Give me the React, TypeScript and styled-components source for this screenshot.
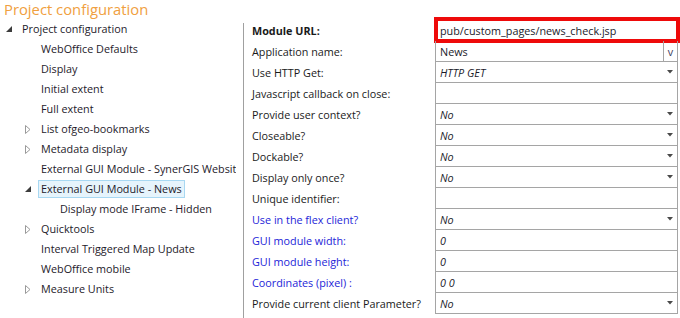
import styled, { createGlobalStyle } from 'styled-components';

const GlobalStyle = createGlobalStyle`
    html, body {
        margin: 0;
        padding: 0;
        background: #ffffff;
    }
    body {
        font-family: 'Open Sans', 'Noto Sans', sans-serif;
        font-size: 10.8px;
        color: #1e1e1e;
    }
`;

type TreeItem = {
    label: string;
    level: number;
    arrow?: 'open' | 'closed';
    selected?: boolean;
};

const treeItems: TreeItem[] = [
    { label: 'Project configuration', level: 0, arrow: 'open' },
    { label: 'WebOffice Defaults', level: 1 },
    { label: 'Display', level: 1 },
    { label: 'Initial extent', level: 1 },
    { label: 'Full extent', level: 1 },
    { label: 'List ofgeo-bookmarks', level: 1, arrow: 'closed' },
    { label: 'Metadata display', level: 1, arrow: 'closed' },
    { label: 'External GUI Module - SynerGIS Website', level: 1 },
    { label: 'External GUI Module - News', level: 1, arrow: 'open', selected: true },
    { label: 'Display mode IFrame - Hidden', level: 2 },
    { label: 'Quicktools', level: 1, arrow: 'closed' },
    { label: 'Interval Triggered Map Update', level: 1 },
    { label: 'WebOffice mobile', level: 1 },
    { label: 'Measure Units', level: 1, arrow: 'closed' },
];

type Prop = {
    label: string;
    value: string;
    kind: 'text' | 'select' | 'combo';
    bold?: boolean;
    blue?: boolean;
    italic?: boolean;
    focus?: boolean;
};

const props: Prop[] = [
    { label: 'Module URL:', value: 'pub/custom_pages/news_check.jsp', kind: 'text', bold: true, focus: true },
    { label: 'Application name:', value: 'News', kind: 'combo' },
    { label: 'Use HTTP Get:', value: 'HTTP GET', kind: 'select', italic: true },
    { label: 'Javascript callback on close:', value: '', kind: 'text' },
    { label: 'Provide user context?', value: 'No', kind: 'select', italic: true },
    { label: 'Closeable?', value: 'No', kind: 'select', italic: true },
    { label: 'Dockable?', value: 'No', kind: 'select', italic: true },
    { label: 'Display only once?', value: 'No', kind: 'select', italic: true },
    { label: 'Unique identifier:', value: '', kind: 'text' },
    { label: 'Use in the flex client?', value: 'No', kind: 'select', italic: true, blue: true },
    { label: 'GUI module width:', value: '0', kind: 'text', italic: true, blue: true },
    { label: 'GUI module height:', value: '0', kind: 'text', italic: true, blue: true },
    { label: 'Coordinates (pixel) :', value: '0 0', kind: 'text', italic: true, blue: true },
    { label: 'Provide current client Parameter?', value: 'No', kind: 'select', italic: true },
];

const ExpandedIcon = () => (
    <svg width="6" height="6" viewBox="0 0 6 6">
        <polygon points="6,0 6,6 0,6" fill="#3c3c3c" />
    </svg>
);

const CollapsedIcon = () => (
    <svg width="6" height="9" viewBox="0 0 6 9">
        <polygon points="0.5,0.5 5,4.5 0.5,8.5" fill="none" stroke="#9a9a9a" strokeWidth="1" />
    </svg>
);

const DropArrow = () => (
    <svg width="6" height="4" viewBox="0 0 6 4">
        <polygon points="0,0 6,0 3,3.5" fill="#4a4a4a" />
    </svg>
);

const App: React.FC = () => {
    return (
        <>
            <GlobalStyle />
            <StyledPage>
                <StyledTitle>Project configuration</StyledTitle>
                <StyledMain>
                    <StyledTree>
                        {treeItems.map((item, index) => (
                            <StyledTreeRow key={index} $level={item.level}>
                                <StyledArrowSlot>
                                    {item.arrow === 'open' && <ExpandedIcon />}
                                    {item.arrow === 'closed' && <CollapsedIcon />}
                                </StyledArrowSlot>
                                <StyledTreeLabel $selected={item.selected}>{item.label}</StyledTreeLabel>
                            </StyledTreeRow>
                        ))}
                    </StyledTree>
                    <StyledSeparator />
                    <StyledGrid>
                        {props.map((item, index) => (
                            <StyledPropRow key={index}>
                                <StyledLabel $bold={item.bold} $blue={item.blue}>
                                    {item.label}
                                </StyledLabel>
                                <StyledValueCell $first={index === 0}>
                                    <StyledValueText $italic={item.italic}>{item.value}</StyledValueText>
                                    {item.kind === 'select' && (
                                        <StyledDropButton>
                                            <DropArrow />
                                        </StyledDropButton>
                                    )}
                                    {item.kind === 'combo' && <StyledComboButton>v</StyledComboButton>}
                                    {item.focus && <StyledFocusFrame />}
                                </StyledValueCell>
                            </StyledPropRow>
                        ))}
                    </StyledGrid>
                </StyledMain>
            </StyledPage>
        </>
    );
};

const StyledPage = styled.div`
    width: 680px;
    height: 318px;
    overflow: hidden;
    display: flex;
    flex-direction: column;
`;

const StyledTitle = styled.div`
    height: 19px;
    padding-left: 4px;
    font-size: 14.8px;
    line-height: 19px;
    color: #f0a040;
`;

const StyledMain = styled.div`
    flex: 1;
    display: flex;
`;

const StyledTree = styled.div`
    width: 236px;
    margin-right: 7px;
    overflow: hidden;
    display: flex;
    flex-direction: column;
`;

const StyledTreeRow = styled.div<{ $level: number }>`
    height: 20px;
    display: flex;
    align-items: center;
    padding-left: ${(p) => p.$level * 19 + 2}px;
    white-space: nowrap;
`;

const StyledArrowSlot = styled.div`
    width: 16px;
    height: 20px;
    flex-shrink: 0;
    display: flex;
    align-items: center;
    padding-left: 4px;
    box-sizing: border-box;
`;

const StyledTreeLabel = styled.div<{ $selected?: boolean }>`
    height: 18px;
    line-height: 16px;
    padding: 0 2px;
    margin-left: 1px;
    box-sizing: border-box;
    border: 1px solid ${(p) => (p.$selected ? '#a8d8f2' : 'transparent')};
    background: ${(p) => (p.$selected ? '#e6f4fc' : 'transparent')};
    color: #1e1a2a;
`;

const StyledSeparator = styled.div`
    width: 1px;
    flex-shrink: 0;
    margin: 4px 8px 0 0;
    background: #a0a0a0;
`;

const StyledGrid = styled.div`
    width: 426px;
    padding-top: 1px;
    display: flex;
    flex-direction: column;
`;

const StyledPropRow = styled.div`
    display: flex;
    height: 21px;
`;

const StyledLabel = styled.div<{ $bold?: boolean; $blue?: boolean }>`
    width: 183px;
    flex-shrink: 0;
    line-height: 21px;
    font-weight: ${(p) => (p.$bold ? 700 : 400)};
    color: ${(p) => (p.$blue ? '#2424d8' : '#1a1a1a')};
    white-space: nowrap;
`;

const StyledValueCell = styled.div<{ $first?: boolean }>`
    position: relative;
    width: 243px;
    display: flex;
    align-items: center;
    box-sizing: border-box;
    border-left: 1px solid #a5a5a5;
    border-right: 1px solid #a5a5a5;
    border-bottom: 1px solid #a5a5a5;
    border-top: ${(p) => (p.$first ? '1px solid #a5a5a5' : 'none')};
`;

const StyledValueText = styled.div<{ $italic?: boolean }>`
    flex: 1;
    padding-left: 4px;
    font-style: ${(p) => (p.$italic ? 'italic' : 'normal')};
    color: #1a1a2a;
    white-space: nowrap;
    overflow: hidden;
`;

const StyledDropButton = styled.div`
    width: 14px;
    display: flex;
    justify-content: center;
    align-items: center;
`;

const StyledComboButton = styled.div`
    width: 13px;
    align-self: stretch;
    display: flex;
    align-items: center;
    justify-content: center;
    border-left: 1px solid #a5a5a5;
    color: #3a3a5a;
`;

const StyledFocusFrame = styled.div`
    position: absolute;
    top: -4px;
    left: -2px;
    right: -3px;
    bottom: -3px;
    border: 4px solid #ee0a0a;
    pointer-events: none;
`;

export default App;
